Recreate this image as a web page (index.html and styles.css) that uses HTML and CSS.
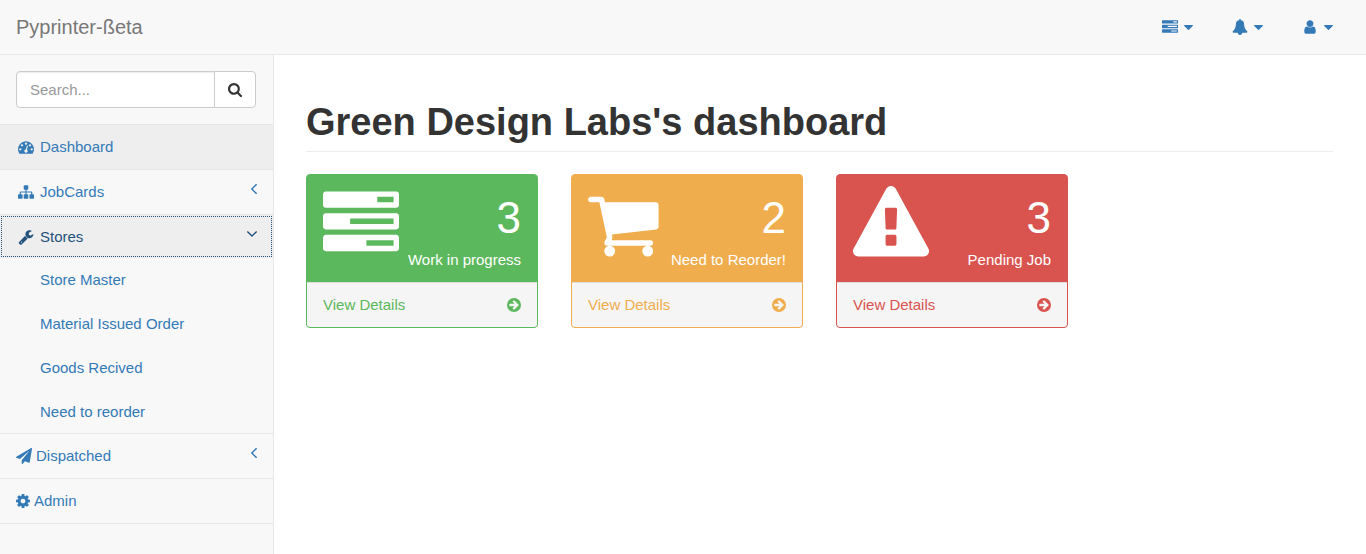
FILE: index.html
```
<!DOCTYPE html>
<html lang="en">
<head>
<meta charset="utf-8">
<meta name="viewport" content="width=device-width, initial-scale=1">
<title>Pyprinter-ßeta</title>
<link rel="stylesheet" href="styles.css">
</head>
<body>
<svg class="sprite" aria-hidden="true">
  <symbol id="tasks" viewBox="0 0 1792 1792"><path d="M1024 1408h640v-128h-640v128zm-384-512h1024v-128h-1024v128zm640-512h384v-128h-384v128zm512 832v256q0 26-19 45t-45 19h-1664q-26 0-45-19t-19-45v-256q0-26 19-45t45-19h1664q26 0 45 19t19 45zm0-512v256q0 26-19 45t-45 19h-1664q-26 0-45-19t-19-45v-256q0-26 19-45t45-19h1664q26 0 45 19t19 45zm0-512v256q0 26-19 45t-45 19h-1664q-26 0-45-19t-19-45v-256q0-26 19-45t45-19h1664q26 0 45 19t19 45z"/></symbol>
  <symbol id="cart" viewBox="0 0 1792 1792"><path d="M640 1536q0 52-38 90t-90 38-90-38-38-90 38-90 90-38 90 38 38 90zm896 0q0 52-38 90t-90 38-90-38-38-90 38-90 90-38 90 38 38 90zm128-1088v512q0 24-16.500 42.500t-40.500 21.500l-1044 122q13 60 13 70 0 16-24 64h920q26 0 45 19t19 45-19 45-45 19h-1024q-26 0-45-19t-19-45q0-11 8-31.500t16-36 21.500-40 15.500-29.500l-177-823h-204q-26 0-45-19t-19-45 19-45 45-19h256q16 0 28.500 6.500t19.500 15.500 13 24.500 8 26 5.500 29.500 4.500 26h1201q26 0 45 19t19 45z"/></symbol>
  <symbol id="warning" viewBox="0 0 1792 1792"><path d="M1024 1375v-190q0-14-9.500-23.500t-22.500-9.500h-192q-13 0-22.500 9.500t-9.500 23.500v190q0 14 9.500 23.500t22.500 9.500h192q13 0 22.500-9.500t9.500-23.500zm-2-374l18-459q0-12-10-19-13-11-24-11h-220q-11 0-24 11-10 7-10 21l17 457q0 10 10 16.500t24 6.500h185q14 0 23.500-6.500t10.500-16.500zm-14-934l768 1408q35 63-2 126-17 29-46.500 46t-63.500 17h-1536q-34 0-63.500-17t-46.500-46q-37-63-2-126l768-1408q17-31 47-49t65-18 65 18 47 49z"/></symbol>
  <symbol id="go" viewBox="128 128 1536 1536"><path fill-rule="evenodd" d="M896 128a768 768 0 1 0 0 1536a768 768 0 1 0 0-1536zM1413 896q0 27-18 45l-91 91-362 362q-18 18-45 18t-45-18l-91-91q-18-18-18-45t18-45l189-189h-502q-26 0-45-19t-19-45v-128q0-26 19-45t45-19h502l-189-189q-18-18-18-45t18-45l91-91q18-18 45-18t45 18l362 362 91 91q18 18 18 45z"/></symbol>
  <symbol id="caret" viewBox="384 640 1024 576"><path d="M1408 704q0 26-19 45l-448 448q-19 19-45 19t-45-19l-448-448q-19-19-19-45t19-45 45-19h896q26 0 45 19t19 45z"/></symbol>
  <symbol id="search" viewBox="64 128 1664 1664"><path d="M1216 832q0-185-131.500-316.500t-316.500-131.500-316.500 131.500-131.500 316.500 131.500 316.500 316.500 131.500 316.500-131.500 131.500-316.500zm512 832q0 52-38 90t-90 38q-54 0-90-38l-343-342q-179 124-399 124-143 0-273.500-55.500t-225-150-150-225-55.500-273.500 55.500-273.500 150-225 225-150 273.500-55.500 273.500 55.500 225 150 150 225 55.500 273.500q0 220-124 399l343 343q37 37 37 90z"/></symbol>
  <symbol id="gauge" viewBox="0 0 1792 1792"><path d="M384 1152q0-53-37.500-90.500t-90.500-37.500-90.500 37.500-37.500 90.500 37.500 90.500 90.500 37.500 90.500-37.500 37.500-90.500zm192-448q0-53-37.500-90.500t-90.500-37.500-90.500 37.500-37.500 90.500 37.500 90.500 90.500 37.500 90.500-37.500 37.500-90.500zm428 481l101-382q6-26-7.500-48.500t-38.500-29.500-48 6.500-30 39.500l-101 382q-60 5-107 43.500t-63 98.500q-20 77 20 146t117 89 146-20 89-117q16-60-6-117t-72-91zm660-33q0-53-37.500-90.500t-90.500-37.500-90.500 37.500-37.500 90.500 37.500 90.500 90.500 37.500 90.500-37.500 37.500-90.500zm-640-640q0-53-37.500-90.500t-90.500-37.500-90.500 37.500-37.500 90.500 37.500 90.500 90.500 37.500 90.500-37.500 37.500-90.500zm448 192q0-53-37.500-90.500t-90.500-37.500-90.500 37.500-37.500 90.500 37.500 90.500 90.500 37.500 90.500-37.500 37.500-90.500zm320 448q0 261-141 483-19 29-54 29h-1402q-35 0-54-29-141-221-141-483 0-182 71-348t191-286 286-191 348-71 348 71 286 191 191 286 71 348z"/></symbol>
  <symbol id="sitemap" viewBox="0 0 1792 1792"><path d="M1792 1248v320q0 40-28 68t-68 28h-320q-40 0-68-28t-28-68v-320q0-40 28-68t68-28h96v-192h-512v192h96q40 0 68 28t28 68v320q0 40-28 68t-68 28h-320q-40 0-68-28t-28-68v-320q0-40 28-68t68-28h96v-192h-512v192h96q40 0 68 28t28 68v320q0 40-28 68t-68 28h-320q-40 0-68-28t-28-68v-320q0-40 28-68t68-28h96v-192q0-52 38-90t90-38h512v-192h-96q-40 0-68-28t-28-68v-320q0-40 28-68t68-28h320q40 0 68 28t28 68v320q0 40-28 68t-68 28h-96v192h512q52 0 90 38t38 90v192h96q40 0 68 28t28 68z"/></symbol>
  <symbol id="wrench" viewBox="0 0 1792 1792"><path d="M448 1472q0-26-19-45t-45-19-45 19-19 45 19 45 45 19 45-19 19-45zm644-420l-682 682q-37 37-90 37-52 0-91-37l-106-108q-38-36-38-90 0-53 38-91l681-681q39 98 114.500 173.500t173.500 114.500zm634-435q0 39-23 106-47 134-164.500 217.500t-258.500 83.500q-185 0-316.500-131.500t-131.500-316.500 131.500-316.500 316.500-131.500q58 0 121.500 16.500t107.500 46.500q16 11 16 28t-16 28l-293 169v224l193 107q5-3 79-48.500t135.500-81 70.500-35.500q15 0 23.500 10t8.500 25z"/></symbol>
  <symbol id="plane" viewBox="0 0 1792 1792"><path d="M1764 11q33 24 27 64l-256 1536q-5 29-32 45-14 8-31 8-11 0-24-5l-453-185-242 295q-18 23-49 23-13 0-22-4-19-7-30.500-23.500t-11.500-36.500v-349l864-1059-1069 925-395-162q-37-14-40-55-2-40 32-59l1664-960q15-9 32-9 20 0 36 11z"/></symbol>
  <symbol id="cog" viewBox="128 128 1536 1536"><path d="M1152 896q0-106-75-181t-181-75-181 75-75 181 75 181 181 75 181-75 75-181zm512-109v222q0 12-8 23t-20 13l-185 28q-19 54-39 91 35 50 107 138 10 12 10 25t-9 23q-27 37-99 108t-94 71q-12 0-26-9l-138-108q-44 23-91 38-16 136-29 186-7 28-36 28h-222q-14 0-24.500-8.500t-11.500-21.500l-28-184q-49-16-90-37l-141 107q-10 9-25 9-14 0-25-11-126-114-165-168-7-10-7-23 0-12 8-23 15-21 51-66.500t54-70.500q-27-50-41-99l-183-27q-13-2-21-12.500t-8-23.500v-222q0-12 8-23t19-13l186-28q14-46 39-92-40-57-107-138-10-12-10-24 0-10 9-23 26-36 98.500-107.500t94.500-71.500q13 0 26 10l138 107q44-23 91-38 16-136 29-186 7-28 36-28h222q14 0 24.500 8.500t11.500 21.500l28 184q49 16 90 37l142-107q9-9 24-9 13 0 25 10 129 119 165 170 7 8 7 22 0 12-8 23-15 21-51 66.500t-54 70.500q26 50 41 98l183 28q13 2 21 12.500t8 23.500z"/></symbol>
  <symbol id="user" viewBox="0 0 1792 1792"><path d="M1536 1399q0 109-62.500 187t-150.500 78h-854q-88 0-150.500-78t-62.500-187q0-85 8.500-160.500t31.500-152 58.500-131 94-89 134.500-34.500q131 128 313 128t313-128q76 0 134.500 34.500t94 89 58.500 131 31.500 152 8.500 160.500zm-256-887q0 159-112.500 271.500t-271.500 112.500-271.500-112.500-112.500-271.500 112.500-271.500 271.500-112.500 271.500 112.500 112.500 271.500z"/></symbol>
  <symbol id="bell" viewBox="-64 0 1792 1792"><path d="M1664 1408q0 52-38 90t-90 38h-448q0 106-75 181t-181 75-181-75-75-181h-448q-52 0-90-38t-38-90q190-161 287-397.500t97-498.500q0-165 96-262t264-117q-8-18-8-37 0-40 28-68t68-28 68 28 28 68q0 19-8 37 168 20 264 117t96 262q0 262 97 498.500t287 397.500z"/></symbol>
  <symbol id="left" viewBox="627 480 576 960"><path d="M1203 544q0 13-10 23l-393 393 393 393q10 10 10 23t-10 23l-50 50q-10 10-23 10t-23-10l-466-466q-10-10-10-23t10-23l466-466q10-10 23-10t23 10l50 50q10 10 10 23z"/></symbol>
  <symbol id="down" viewBox="397 653 998 582"><path d="M1395 736q0 13-10 23l-466 466q-10 10-23 10t-23-10l-466-466q-10-10-10-23t10-23l50-50q10-10 23-10t23 10l393 393 393-393q10-10 23-10t23 10l50 50q10 10 10 23z"/></symbol>
</svg>

<header class="topbar">
  <a class="brand" href="#">Pyprinter-ßeta</a>
  <nav class="top-links" aria-label="Account">
    <a href="#" aria-label="Tasks"><span class="slot"><svg class="icon"><use href="#tasks"/></svg></span><svg class="caret"><use href="#caret"/></svg></a>
    <a href="#" aria-label="Alerts"><span class="slot"><svg class="icon"><use href="#bell"/></svg></span><svg class="caret"><use href="#caret"/></svg></a>
    <a href="#" aria-label="User"><span class="slot"><svg class="icon"><use href="#user"/></svg></span><svg class="caret"><use href="#caret"/></svg></a>
  </nav>
</header>

<div class="layout">
  <aside class="sidebar">
    <form class="search">
      <input type="text" placeholder="Search..." aria-label="Search">
      <button type="button" aria-label="Search"><svg><use href="#search"/></svg></button>
    </form>
    <ul class="menu">
      <li><a class="active" href="#"><span class="slot"><svg class="icon"><use href="#gauge"/></svg></span>Dashboard</a></li>
      <li><a href="#"><span class="slot"><svg class="icon"><use href="#sitemap"/></svg></span>JobCards<span class="arrow"><svg class="arrow-left"><use href="#left"/></svg></span></a></li>
      <li>
        <a class="focused" href="#"><span class="slot"><svg class="icon"><use href="#wrench"/></svg></span>Stores<span class="arrow"><svg class="arrow-down"><use href="#down"/></svg></span></a>
        <ul class="submenu">
          <li><a href="#">Store Master</a></li>
          <li><a href="#">Material Issued Order</a></li>
          <li><a href="#">Goods Recived</a></li>
          <li><a href="#">Need to reorder</a></li>
        </ul>
      </li>
      <li><a href="#"><svg class="icon"><use href="#plane"/></svg>Dispatched<span class="arrow"><svg class="arrow-left"><use href="#left"/></svg></span></a></li>
      <li><a href="#"><svg class="icon small"><use href="#cog"/></svg>Admin</a></li>
    </ul>
  </aside>

  <main class="content">
    <h1>Green Design Labs's dashboard</h1>
    <div class="cards">
      <section class="card green">
        <div class="card-body">
          <svg class="card-icon"><use href="#tasks"/></svg>
          <div class="figures"><div class="count">3</div><div>Work in progress</div></div>
        </div>
        <a class="card-footer" href="#">View Details<svg><use href="#go"/></svg></a>
      </section>
      <section class="card orange">
        <div class="card-body">
          <svg class="card-icon"><use href="#cart"/></svg>
          <div class="figures"><div class="count">2</div><div>Need to Reorder!</div></div>
        </div>
        <a class="card-footer" href="#">View Details<svg><use href="#go"/></svg></a>
      </section>
      <section class="card red">
        <div class="card-body">
          <svg class="card-icon"><use href="#warning"/></svg>
          <div class="figures"><div class="count">3</div><div>Pending Job</div></div>
        </div>
        <a class="card-footer" href="#">View Details<svg><use href="#go"/></svg></a>
      </section>
    </div>
  </main>
</div>
</body>
</html>
```

FILE: styles.css
```
* { box-sizing: border-box; }

body {
  margin: 0;
  min-height: 100vh;
  display: flex;
  flex-direction: column;
  background: #f8f8f8;
  color: #333;
  font: 15px/22px "Helvetica Neue", Helvetica, "Liberation Sans", Arial, sans-serif;
}

a { color: #337ab7; text-decoration: none; }
ul { margin: 0; padding: 0; list-style: none; }
svg { display: block; flex: none; fill: currentColor; }
.sprite { position: absolute; width: 0; height: 0; }

.icon { width: 16px; height: 16px; }
.icon.small { width: 14px; height: 14px; }
.slot { display: flex; flex: none; justify-content: center; width: 20px; }

.topbar {
  display: flex;
  align-items: center;
  justify-content: space-between;
  height: 55px;
  padding: 0 33px 0 16px;
  border-bottom: 1px solid #e7e7e7;
}
.brand { color: #777; font-size: 20px; }
.top-links { display: flex; gap: 37px; }
.top-links a { display: flex; align-items: center; gap: 4px; }
.caret { width: 9px; height: 5px; }

.layout { flex: 1; display: flex; }

.sidebar { flex: none; width: 274px; border-right: 1px solid #e7e7e7; }
.search { display: flex; padding: 16px 17px 16px 16px; border-bottom: 1px solid #e7e7e7; }
.search input {
  flex: 1;
  min-width: 0;
  height: 37px;
  padding: 0 13px;
  border: 1px solid #ccc;
  border-radius: 4px 0 0 4px;
  background: #fff;
  box-shadow: inset 0 1px 1px rgba(0, 0, 0, .075);
  color: #555;
  font: inherit;
}
.search input::placeholder { color: #999; opacity: 1; }
.search button {
  display: flex;
  align-items: center;
  justify-content: center;
  width: 42px;
  margin-left: -1px;
  padding: 0;
  border: 1px solid #ccc;
  border-radius: 0 4px 4px 0;
  background: #fff;
  color: #333;
}
.search button svg { width: 14px; height: 14px; }

.menu > li { border-bottom: 1px solid #e7e7e7; }
.menu a { display: flex; align-items: center; gap: 4px; padding: 11px 16px; }
.menu .active { background: #eee; }
.menu .focused {
  padding-bottom: 10px;
  background: #eee;
  color: #23527c;
  outline: 1px dotted #23527c;
  outline-offset: -2px;
}
.submenu { margin-bottom: -1px; }
.menu .submenu a { padding-left: 40px; }
.arrow { display: flex; align-items: center; align-self: flex-start; height: 16px; margin-left: auto; }
.arrow-left { width: 6px; height: 10px; }
.arrow-down { width: 10px; height: 6px; }

.content { flex: 1; min-width: 0; padding: 45px 33px 0 32px; background: #fff; }
h1 {
  margin: 0 0 22px;
  padding-bottom: 7px;
  border-bottom: 1px solid #eee;
  font-size: 38px;
  font-weight: bold;
  line-height: 44px;
}

.cards { display: grid; grid-template-columns: repeat(4, 1fr); gap: 33px; }
.card { border: 1px solid var(--tone); border-radius: 4px; background: var(--tone); overflow: hidden; }
.green { --tone: #5cb85c; }
.orange { --tone: #f0ad4e; }
.red { --tone: #d9534f; }
.card-body {
  display: flex;
  align-items: flex-start;
  justify-content: space-between;
  padding: 11px 16px;
  color: #fff;
}
.card-icon { width: 76px; height: 76px; }
.figures { padding-top: 10px; text-align: right; white-space: nowrap; }
.count { margin-bottom: 9px; font-size: 44px; line-height: 44px; }
.card-footer {
  display: flex;
  align-items: center;
  justify-content: space-between;
  padding: 11px 16px;
  border-top: 1px solid #ddd;
  background: #f5f5f5;
  color: var(--tone);
}
.card-footer svg { width: 14px; height: 14px; }
```
